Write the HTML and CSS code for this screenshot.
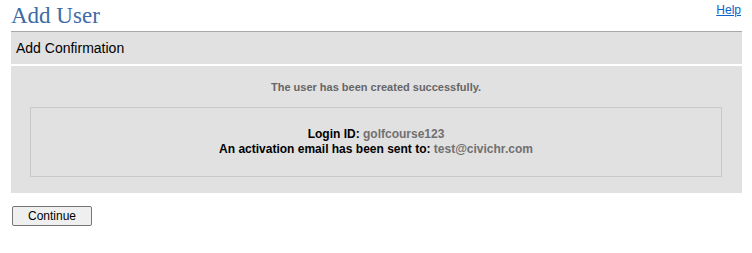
FILE: index.html
```html
<!DOCTYPE html>
<html>
<head>
<meta charset="utf-8">
<link rel="stylesheet" href="styles.css">
</head>
<body>
<div class="page">
  <div class="titlebar">
    <h1 class="title">Add User</h1>
    <a class="help" href="#">Help</a>
  </div>
  <div class="section-head">Add Confirmation</div>
  <div class="panel">
    <p class="message">The user has been created successfully.</p>
    <div class="details">
      <div class="line">Login ID: <span class="value">golfcourse123</span></div>
      <div class="line">An activation email has been sent to: <span class="value">test@civichr.com</span></div>
    </div>
  </div>
  <div class="actions">
    <button class="btn" type="button">Continue</button>
  </div>
</div>
</body>
</html>
```
FILE: styles.css
```css
html, body {
  margin: 0;
  padding: 0;
  background: #ffffff;
}
body {
  font-family: "Liberation Sans", Arial, sans-serif;
}
.page {
  margin: 0 10px 0 11px;
}
.titlebar {
  display: flex;
  justify-content: space-between;
  align-items: flex-start;
  height: 31px;
}
.title {
  margin: 0;
  font-family: "Liberation Serif", "Times New Roman", serif;
  font-weight: normal;
  font-size: 23px;
  line-height: 31px;
  color: #3e6ba4;
}
.help {
  font-size: 12px;
  line-height: 14px;
  margin-top: 3px;
  margin-right: 1px;
  color: #0b62cc;
  text-decoration: underline;
}
.section-head {
  border-top: 1px solid #a9a9a9;
  background: #e1e1e1;
  height: 32px;
  line-height: 32px;
  padding-left: 5px;
  font-size: 14px;
  color: #000;
}
.panel {
  margin-top: 2px;
  background: #e1e1e1;
  padding: 14px 20px 16px 19px;
}
.message {
  margin: 0 0 13px;
  text-align: center;
  font-size: 11px;
  line-height: 14px;
  font-weight: bold;
  color: #666666;
}
.details {
  border: 1px solid #c8c8c8;
  padding: 19px 0;
  text-align: center;
  font-size: 12px;
  line-height: 15px;
  font-weight: bold;
  color: #000;
}
.value {
  color: #707070;
}
.actions {
  padding: 13px 0 0 1px;
}
.btn {
  width: 80px;
  height: 20px;
  padding: 0;
  font-family: "Liberation Sans", Arial, sans-serif;
  font-size: 12px;
  color: #000;
  background: #efefef;
  border: 1px solid #767676;
  border-radius: 2px;
}
```
